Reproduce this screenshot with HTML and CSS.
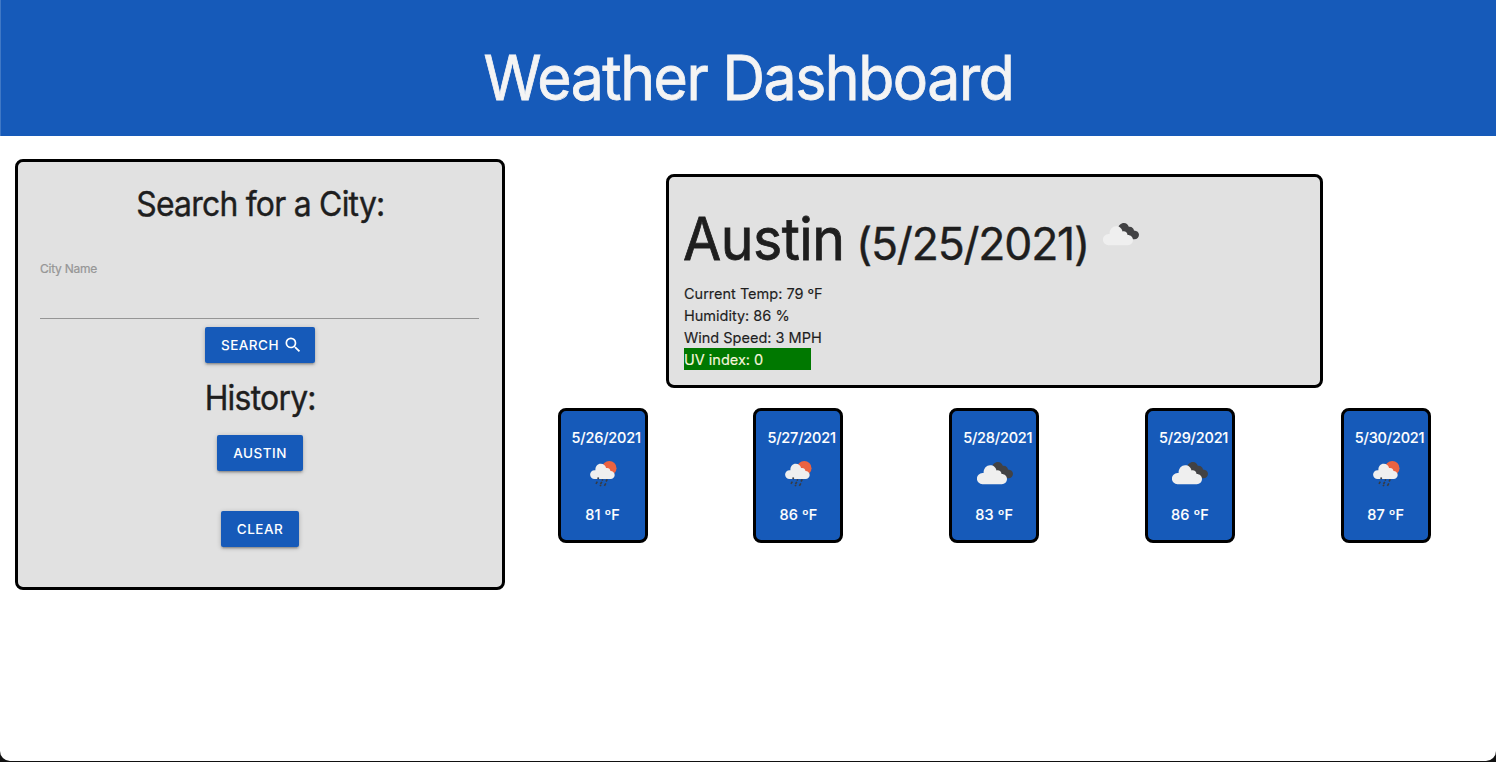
FILE: index.html
```html
<!DOCTYPE html>
<html lang="en">
<head>
<meta charset="utf-8">
<title>Weather Dashboard</title>
<link rel="stylesheet" href="styles.css">
</head>
<body>
<svg class="defs" aria-hidden="true">
  <symbol id="broken-clouds" viewBox="0 0 36 23">
    <path class="dark" d="M15 7C15 2 18 0 21 0c2.300 0 4 1.400 4.800 3.700C29 3.300 30.600 5.300 31 7.400c3 .1 5 2 5 4.300 0 2.500-2 4.500-4.500 4.500H27z"/>
    <path class="light" d="M5.500 22.200A5.600 5.600 0 0 1 5.500 11h1.100C6.400 6.500 9.500 3.200 13 3.200c3.800 0 5.700 2 6.500 5.200 2.800-.6 4.800 1.200 5.100 3.500 3.300 0 5.400 2.200 5.400 5.200s-2.300 5.100-5.200 5.100z"/>
  </symbol>
  <symbol id="rain" viewBox="0 0 27 26">
    <circle class="sun" cx="19.300" cy="7.200" r="7.200"/>
    <path class="light" d="M4.500 18A4.400 4.400 0 0 1 4.500 9.200h.9C5.200 5.500 7.600 2.800 10.700 2.800c2.900 0 4.800 1.600 5.400 4.200 2.500-.5 4 .8 4.400 2.900 2.400 0 4.200 1.800 4.200 4.100 0 2.300-1.800 4-4.100 4z"/>
    <path class="drops" d="M8.600 16.500l-.8 1.500M12.800 18.300l-.8 1.300M17.300 18.300l-1.300 2.200M7.300 20.600l-1.300 2.200M11.800 20.800l-1.300 2.200M15.800 22.300l-1.400 2.500M10.900 23.800l-.8 1.400"/>
  </symbol>
</svg>
<div class="window">
  <header class="banner"><h1 class="title">Weather Dashboard</h1></header>
  <main class="content">
    <section class="panel search">
      <h2 class="heading">Search for a City:</h2>
      <label class="field"><span class="label">City Name</span><input class="input" type="text"></label>
      <button class="btn btn-search"><span>SEARCH</span><svg class="glass" viewBox="0 0 24 24"><path d="M15.500 14h-.79l-.28-.27A6.471 6.471 0 0 0 16 9.500 6.500 6.500 0 1 0 9.500 16c1.610 0 3.090-.59 4.230-1.570l.27.28v.79l5 4.990L20.490 19l-4.990-5zm-6 0C7.010 14 5 11.990 5 9.500S7.010 5 9.500 5 14 7.010 14 9.500 11.990 14 9.500 14z"/></svg></button>
      <h2 class="heading history">History:</h2>
      <button class="btn btn-city">AUSTIN</button>
      <button class="btn btn-clear">CLEAR</button>
    </section>
    <section class="results">
      <article class="panel current">
        <div class="place"><h2 class="city">Austin</h2><span class="today">(5/25/2021)</span><svg class="now"><use href="#broken-clouds"/></svg></div>
        <p class="stat">Current Temp: 79 ºF</p>
        <p class="stat">Humidity: 86 %</p>
        <p class="stat">Wind Speed: 3 MPH</p>
        <p class="stat uv">UV index: 0</p>
      </article>
      <div class="forecast">
        <article class="day"><span class="date">5/26/2021</span><svg class="rain"><use href="#rain"/></svg><span class="temp">81 ºF</span></article>
        <article class="day"><span class="date">5/27/2021</span><svg class="rain"><use href="#rain"/></svg><span class="temp">86 ºF</span></article>
        <article class="day"><span class="date">5/28/2021</span><svg class="cloud"><use href="#broken-clouds"/></svg><span class="temp">83 ºF</span></article>
        <article class="day"><span class="date">5/29/2021</span><svg class="cloud"><use href="#broken-clouds"/></svg><span class="temp">86 ºF</span></article>
        <article class="day"><span class="date">5/30/2021</span><svg class="rain"><use href="#rain"/></svg><span class="temp">87 ºF</span></article>
      </div>
    </section>
  </main>
</div>
</body>
</html>
```
FILE: styles.css
```css
* { box-sizing: border-box; }
body { margin: 0; background: #111; color: #1e1e1e; font-family: Inter, "Liberation Sans", sans-serif; font-size: 15px; overflow: hidden; }
h1, h2, p { margin: 0; font-weight: 400; }
.defs { display: none; }
.window { height: 761px; background: #fff; border-radius: 0 0 10px 10px; overflow: hidden; }
.banner { height: 136px; padding-top: 37px; background: #165ab9; border-left: 1px solid #4078c5; text-align: center; }
.title { color: #f4f4f4; font-size: 62px; line-height: 81px; letter-spacing: -1.500px; white-space: nowrap; -webkit-text-stroke: .8px #f4f4f4; transform: scaleX(.95); }
.content { display: flex; align-items: flex-start; padding: 23px 0 0 15px; }
.panel { background: #e1e1e1; border: 3px solid #000; border-radius: 8px; }
.search { width: 490px; height: 431px; padding: 20px 22px 0; display: flex; flex-direction: column; align-items: center; }
.heading { font-size: 34px; line-height: 43px; letter-spacing: -.8px; white-space: nowrap; -webkit-text-stroke: .4px #1e1e1e; transform: scaleX(.938); }
.field { align-self: stretch; margin: 35px 1px 0 0; display: flex; flex-direction: column; }
.label { color: #969696; font-size: 12px; line-height: 18px; letter-spacing: -.25px; -webkit-text-stroke: .2px #969696; }
.input { height: 41px; border: 0; border-bottom: 1px solid #959595; background: transparent; outline: 0; }
.btn { height: 36px; padding: 0; flex: none; display: flex; align-items: center; justify-content: center; border: 0; border-radius: 2px; background: #165ab9; color: #fff; font: 500 13.500px/36px Inter, "Liberation Sans", sans-serif; letter-spacing: .5px; box-shadow: 0 2px 2px rgba(0,0,0,.14), 0 3px 1px -2px rgba(0,0,0,.12), 0 1px 5px rgba(0,0,0,.2); }
.btn-search { width: 110px; margin-top: 8px; padding-left: 4px; gap: 4px; }
.glass { width: 20px; height: 20px; fill: #fff; }
.history { margin-top: 13px; }
.btn-city { width: 86px; margin-top: 16px; }
.btn-clear { width: 78px; margin-top: 40px; }
.results { flex: 1; padding: 15px 65.200px 0 52.600px; display: flex; flex-direction: column; }
.current { width: 657px; height: 214px; margin-left: 108.400px; padding: 25px 15px 0; }
.place { height: 80px; display: flex; align-items: baseline; white-space: nowrap; }
.city { width: 161px; margin-left: -1px; font-size: 59px; line-height: 73px; letter-spacing: -.5px; -webkit-text-stroke: .8px #1e1e1e; transform: scaleX(.938); transform-origin: left; }
.today { margin-left: 12px; font-size: 44.500px; letter-spacing: -1.200px; -webkit-text-stroke: .4px #1e1e1e; }
.now { width: 36px; height: 23px; margin-left: 14px; align-self: flex-start; margin-top: 21px; }
.stat { padding-top: 1px; line-height: 21px; font-size: 14.500px; white-space: nowrap; -webkit-text-stroke: .15px; }
.uv { width: 127px; color: #f5f5dc; background: #007800; }
.forecast { display: flex; justify-content: space-between; margin-top: 20px; }
.day { width: 90px; height: 135px; border: 3px solid #000; border-radius: 8px; background: #165ab9; color: #fff; display: flex; flex-direction: column; align-items: center; padding-top: 16px; font-weight: 500; font-size: 14.500px; line-height: 22px; white-space: nowrap; -webkit-text-stroke: .1px #fff; }
.date { align-self: flex-start; margin-left: 11px; letter-spacing: -.2px; }
.temp { letter-spacing: .1px; }
.rain { width: 27px; height: 26px; margin: 12px 0 17px 1px; }
.cloud { width: 36px; height: 23px; margin: 13px 0 19px 1px; }
.light { fill: #efefef; }
.dark { fill: #424244; }
.sun { fill: #eb6341; }
.drops { fill: none; stroke: #383b42; stroke-width: 1.600; }
```
